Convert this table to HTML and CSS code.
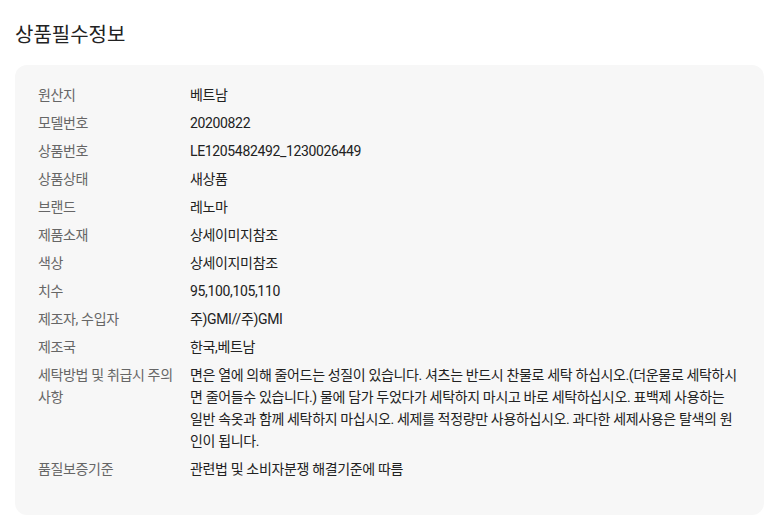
FILE: index.html
```html
<!DOCTYPE html>
<html lang="ko">
<head>
    <meta charset="UTF-8">
    <meta name="viewport" content="width=device-width, initial-scale=1.0">
    <title>상품필수정보</title>
    <link rel="stylesheet" href="styles.css">
</head>
<body>
    <div class="container">
        <h2 class="title">상품필수정보</h2>
        <div class="info-box">
            <dl class="info-list">
                <div class="info-row"><dt>원산지</dt><dd>베트남</dd></div>
                <div class="info-row"><dt>모델번호</dt><dd>20200822</dd></div>
                <div class="info-row"><dt>상품번호</dt><dd>LE1205482492_1230026449</dd></div>
                <div class="info-row"><dt>상품상태</dt><dd>새상품</dd></div>
                <div class="info-row"><dt>브랜드</dt><dd>레노마</dd></div>
                <div class="info-row"><dt>제품소재</dt><dd>상세이미지참조</dd></div>
                <div class="info-row"><dt>색상</dt><dd>상세이지미참조</dd></div>
                <div class="info-row"><dt>치수</dt><dd>95,100,105,110</dd></div>
                <div class="info-row"><dt>제조자, 수입자</dt><dd>주)GMI//주)GMI</dd></div>
                <div class="info-row"><dt>제조국</dt><dd>한국,베트남</dd></div>
                <div class="info-row"><dt>세탁방법 및 취급시 주의사항</dt><dd>면은 열에 의해 줄어드는 성질이 있습니다. 셔츠는 반드시 찬물로 세탁 하십시오.(더운물로 세탁하시면 줄어들수 있습니다.) 물에 담가 두었다가 세탁하지 마시고 바로 세탁하십시오. 표백제 사용하는 일반 속옷과 함께 세탁하지 마십시오. 세제를 적정량만 사용하십시오. 과다한 세제사용은 탈색의 원인이 됩니다.</dd></div>
                <div class="info-row"><dt>품질보증기준</dt><dd>관련법 및 소비자분쟁 해결기준에 따름</dd></div>
            </dl>
        </div>
    </div>
</body>
</html>
```

FILE: styles.css
```css
body {
    font-family: Roboto, 'Noto Sans CJK KR', sans-serif;
    background-color: #ffffff;
    color: #222222;
    margin: 0;
    padding: 0;
}
.container {
    padding: 20px 16px 8px 15px;
}
.title {
    font-size: 20px;
    font-weight: 400;
    line-height: 30px;
    margin: 0 0 15px;
    color: #222222;
}
.info-box {
    background-color: #f7f7f7;
    border-radius: 12px;
    padding: 16px 26px 32px 23px;
}
.info-list {
    margin: 0;
    font-size: 14px;
    line-height: 22px;
    letter-spacing: -0.35px;
}
.info-row {
    display: flex;
    padding: 3px 0;
}
.info-row dt {
    flex: 0 0 140px;
    margin-right: 12px;
    color: #666666;
}
.info-row dd {
    flex: 1;
    margin: 0;
    color: #222222;
}
```
